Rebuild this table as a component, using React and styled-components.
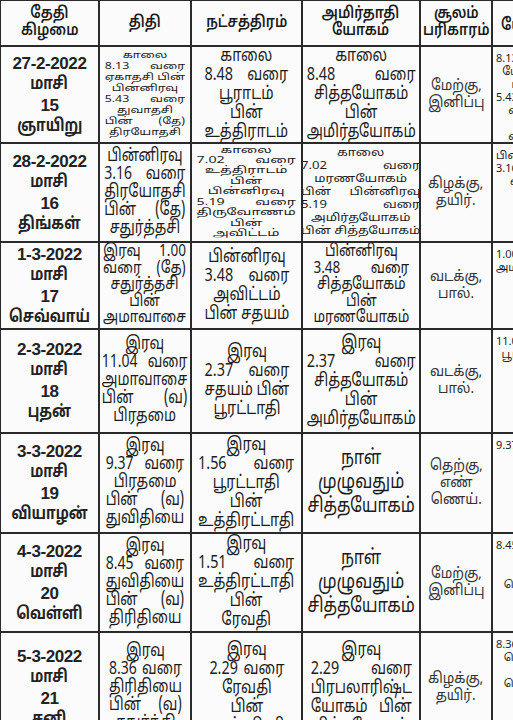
import React from "react";
import styled, { createGlobalStyle } from "styled-components";

const GlobalStyle = createGlobalStyle`
  html, body {
    margin: 0;
    padding: 0;
    background: #fbfbfb;
    overflow: hidden;
  }
  body {
    font-family: "Noto Sans Tamil", "Lohit Tamil", "Noto Sans", "Liberation Sans", sans-serif;
    color: #1c1c1c;
  }
`;

const headers = [
  ["தேதி", "கிழமை"],
  ["திதி"],
  ["நட்சத்திரம்"],
  ["அமிர்தாதி", "யோகம்"],
  ["சூலம்", "பரிகாரம்"],
  ["யோகம்"],
];

// text styles: font size, line height, horizontal squeeze
const styles = {
  tiny: { size: 9.5, lh: 11, sx: 1.3 },
  tinyWide: { size: 9.5, lh: 10.4, sx: 1.5 },
  small: { size: 10.5, lh: 13, sx: 1.25 },
  tithi: { size: 17.5, lh: 18, sx: 0.8 },
  normal: { size: 18, lh: 19, sx: 0.8 },
  tight: { size: 16.5, lh: 16.5, sx: 0.82 },
  large: { size: 20.5, lh: 24, sx: 0.8 },
  soolam: { size: 15, lh: 17, sx: 0.9 },
  extra: { size: 11, lh: 13, sx: 1 },
};

const rows = [
  {
    date: "27-2-2022", num: "15", day: "ஞாயிறு",
    tithi: ["காலை", "8.13 வரை", "ஏகாதசி பின்", "பின்னிரவு", "5.43 வரை", "துவாதசி", "பின் (தே)", "திரயோதசி"],
    tithiStyle: "tiny",
    star: ["காலை", "8.48 வரை", "பூராடம்", "பின்", "உத்திராடம்"],
    amirtha: ["காலை", "8.48 வரை", "சித்தயோகம்", "பின்", "அமிர்தயோகம்"],
    soolam: ["மேற்கு,", "இனிப்பு"],
    extra: ["8.13 வரை", "யோகம்", "பின்", "5.43 வரை", "வரை", "", "வரை"],
  },
  {
    date: "28-2-2022", num: "16", day: "திங்கள்",
    tithi: ["பின்னிரவு", "3.16 வரை", "திரயோதசி", "பின் (தே)", "சதுர்த்தசி"],
    star: ["காலை", "7.02 வரை", "உத்திராடம்", "பின்", "பின்னிரவு", "5.19 வரை", "திருவோணம்", "பின்", "அவிட்டம்"],
    starStyle: "tinyWide",
    amirtha: ["காலை", "7.02 வரை", "மரணயோகம்", "பின் பின்னிரவு", "5.19 வரை", "அமிர்தயோகம்", "பின் சித்தயோகம்"],
    amirthaStyle: "small",
    soolam: ["கிழக்கு,", "தயிர்."],
    extra: ["பின்னிரவு", "3.16 வரை", "வரை", "", "."],
  },
  {
    date: "1-3-2022", num: "17", day: "செவ்வாய்",
    tithi: ["இரவு 1.00", "வரை (தே)", "சதுர்த்தசி", "பின்", "அமாவாசை"],
    tithiStyle: "tight",
    star: ["பின்னிரவு", "3.48 வரை", "அவிட்டம்", "பின் சதயம்"],
    amirtha: ["பின்னிரவு", "3.48 வரை", "சித்தயோகம்", "பின்", "மரணயோகம்"],
    amirthaStyle: "tight",
    soolam: ["வடக்கு,", "பால்."],
    extra: ["1.00 வரை", "அமாவாசை"],
  },
  {
    date: "2-3-2022", num: "18", day: "புதன்",
    tithi: ["இரவு", "11.04 வரை", "அமாவாசை", "பின் (வ)", "பிரதமை"],
    star: ["இரவு", "2.37 வரை", "சதயம் பின்", "பூரட்டாதி"],
    amirtha: ["இரவு", "2.37 வரை", "சித்தயோகம்", "பின்", "அமிர்தயோகம்"],
    soolam: ["வடக்கு,", "பால்."],
    extra: ["11.04 வரை", "பூரட்டாதி", "அ"],
  },
  {
    date: "3-3-2022", num: "19", day: "வியாழன்",
    tithi: ["இரவு", "9.37 வரை", "பிரதமை", "பின் (வ)", "துவிதியை"],
    star: ["இரவு", "1.56 வரை", "பூரட்டாதி", "பின்", "உத்திரட்டாதி"],
    amirtha: ["நாள்", "முழுவதும்", "சித்தயோகம்"],
    amirthaStyle: "large",
    soolam: ["தெற்கு,", "எண்", "ணெய்."],
    extra: ["9.37 வரை", "அ", "", "அ"],
  },
  {
    date: "4-3-2022", num: "20", day: "வெள்ளி",
    tithi: ["இரவு", "8.45 வரை", "துவிதியை", "பின் (வ)", "திரிதியை"],
    star: ["இரவு", "1.51 வரை", "உத்திரட்டாதி", "பின்", "ரேவதி"],
    amirtha: ["நாள்", "முழுவதும்", "சித்தயோகம்"],
    amirthaStyle: "large",
    soolam: ["மேற்கு,", "இனிப்பு"],
    extra: ["8.45 வரை", "(", "", "தெற்கு"],
  },
  {
    date: "5-3-2022", num: "21", day: "சனி",
    tithi: ["இரவு", "8.36 வரை", "திரிதியை", "பின் (வ)", "சதுர்த்தி"],
    star: ["இரவு", "2.29 வரை", "ரேவதி", "பின்", "அஸ்வினி"],
    amirtha: ["இரவு", "2.29 வரை", "பிரபலாரிஷ்ட", "யோகம் பின்", "சித்தயோகம்"],
    soolam: ["கிழக்கு,", "தயிர்."],
    extra: ["8.36 வரை", "தெற்கு", "", "தெற்கு"],
  },
];

const Viewport = styled.div`
  width: 513px;
  height: 720px;
  overflow: hidden;
`;

const Grid = styled.div`
  display: grid;
  width: max-content;
  grid-template-columns: 97px 90px 109px 116px 70px 80px;
  grid-template-rows: 44px 95px 97px 85px 102px 98px 97px 110px;
  gap: 2px;
  padding: 1px 0 0 1px;
  background: #2a2a2a;
`;

const Cell = styled.div`
  background: #fbfbfb;
  display: flex;
  flex-direction: column;
  align-items: ${(p) => (p.$left ? "flex-start" : "center")};
  justify-content: ${(p) => (p.$top ? "flex-start" : "center")};
  padding: ${(p) => (p.$left ? "6px 0 0 3px" : "0 2px")};
  overflow: hidden;
`;

const HeadText = styled.div`
  font-size: 16px;
  font-weight: 600;
  line-height: 17px;
  text-align: center;
  color: #1a1a1a;
  white-space: nowrap;
  transform: scaleX(0.85);
`;

const DateLine = styled.div`
  font-family: "Liberation Sans", Arial, sans-serif;
  font-size: 17px;
  font-weight: 700;
  letter-spacing: -0.4px;
  line-height: 21px;
  color: #222;
  text-align: center;
`;

const DayLine = styled.div`
  font-size: 17px;
  font-weight: 700;
  line-height: 21px;
  color: #222;
  text-align: center;
  white-space: nowrap;
  transform: scaleX(0.82);
`;

const Block = styled.div`
  display: inline-block;
  flex-shrink: 0;
  font-size: ${(p) => p.$size}px;
  line-height: ${(p) => p.$lh}px;
  color: ${(p) => p.$color || "#1c1c1c"};
  transform: scaleX(${(p) => p.$sx});
  transform-origin: ${(p) => (p.$left ? "left center" : "center")};
`;

const Line = styled.span`
  display: block;
  white-space: nowrap;
  text-align: ${(p) => (p.$spread ? "justify" : "center")};
  text-align-last: ${(p) => (p.$spread ? "justify" : "center")};
  min-height: ${(p) => p.$lh}px;
`;

function Lines({ items, kind, color, left }) {
  const s = styles[kind];
  return (
    <Block $size={s.size} $lh={s.lh} $sx={s.sx} $color={color} $left={left}>
      {items.map((t, i) => (
        <Line key={i} $spread={t.includes(" ")} $lh={s.lh}>
          {t}
        </Line>
      ))}
    </Block>
  );
}

function App() {
  return (
    <>
      <GlobalStyle />
      <Viewport>
        <Grid>
          {headers.map((h, i) => (
            <Cell key={"h" + i} $left={i === 5}>
              {h.map((t) => (
                <HeadText key={t}>{t}</HeadText>
              ))}
            </Cell>
          ))}
          {rows.map((r) => (
            <React.Fragment key={r.date}>
              <Cell>
                <DateLine>{r.date}</DateLine>
                <DayLine>மாசி</DayLine>
                <DateLine>{r.num}</DateLine>
                <DayLine>{r.day}</DayLine>
              </Cell>
              <Cell>
                <Lines items={r.tithi} kind={r.tithiStyle || "tithi"} />
              </Cell>
              <Cell>
                <Lines items={r.star} kind={r.starStyle || "normal"} />
              </Cell>
              <Cell>
                <Lines items={r.amirtha} kind={r.amirthaStyle || "normal"} />
              </Cell>
              <Cell>
                <Lines items={r.soolam} kind="soolam" color="#333" />
              </Cell>
              <Cell $left $top>
                <Lines items={r.extra} kind="extra" left />
              </Cell>
            </React.Fragment>
          ))}
        </Grid>
      </Viewport>
    </>
  );
}

export default App;
